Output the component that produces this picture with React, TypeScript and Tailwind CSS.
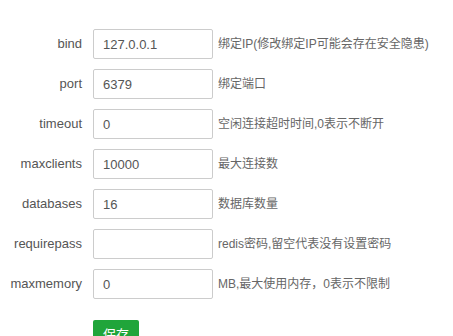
const rows = [
  { name: 'bind', value: '127.0.0.1', help: '绑定IP(修改绑定IP可能会存在安全隐患)' },
  { name: 'port', value: '6379', help: '绑定端口' },
  { name: 'timeout', value: '0', help: '空闲连接超时时间,0表示不断开' },
  { name: 'maxclients', value: '10000', help: '最大连接数' },
  { name: 'databases', value: '16', help: '数据库数量' },
  { name: 'requirepass', value: '', help: 'redis密码,留空代表没有设置密码' },
  { name: 'maxmemory', value: '0', help: 'MB,最大使用内存，0表示不限制' },
];

export default function App() {
  return (
    <div
      className="h-[336px] w-[453px] overflow-hidden bg-white pt-[29px] text-[13px] text-[#555]"
      style={{ fontFamily: '"Liberation Sans", "Noto Sans CJK SC", sans-serif' }}
    >
      <div className="flex flex-col gap-[10px]">
        {rows.map((row) => (
          <div key={row.name} className="flex h-[30px] items-center">
            <span className="w-[82px] text-right">{row.name}</span>
            <input
              defaultValue={row.value}
              className="ml-[11px] h-[30px] w-[120px] rounded-[2px] border border-[#ccc] px-[9px] text-[13px] text-[#555] outline-none"
            />
            <span className="ml-[5px] whitespace-nowrap text-[12px] text-[#666]">{row.help}</span>
          </div>
        ))}
      </div>
      <button className="ml-[93px] mt-[21px] h-[30px] w-[46px] rounded-[2px] bg-[#20a53a] text-[13px] text-white">
        保存
      </button>
    </div>
  );
}
